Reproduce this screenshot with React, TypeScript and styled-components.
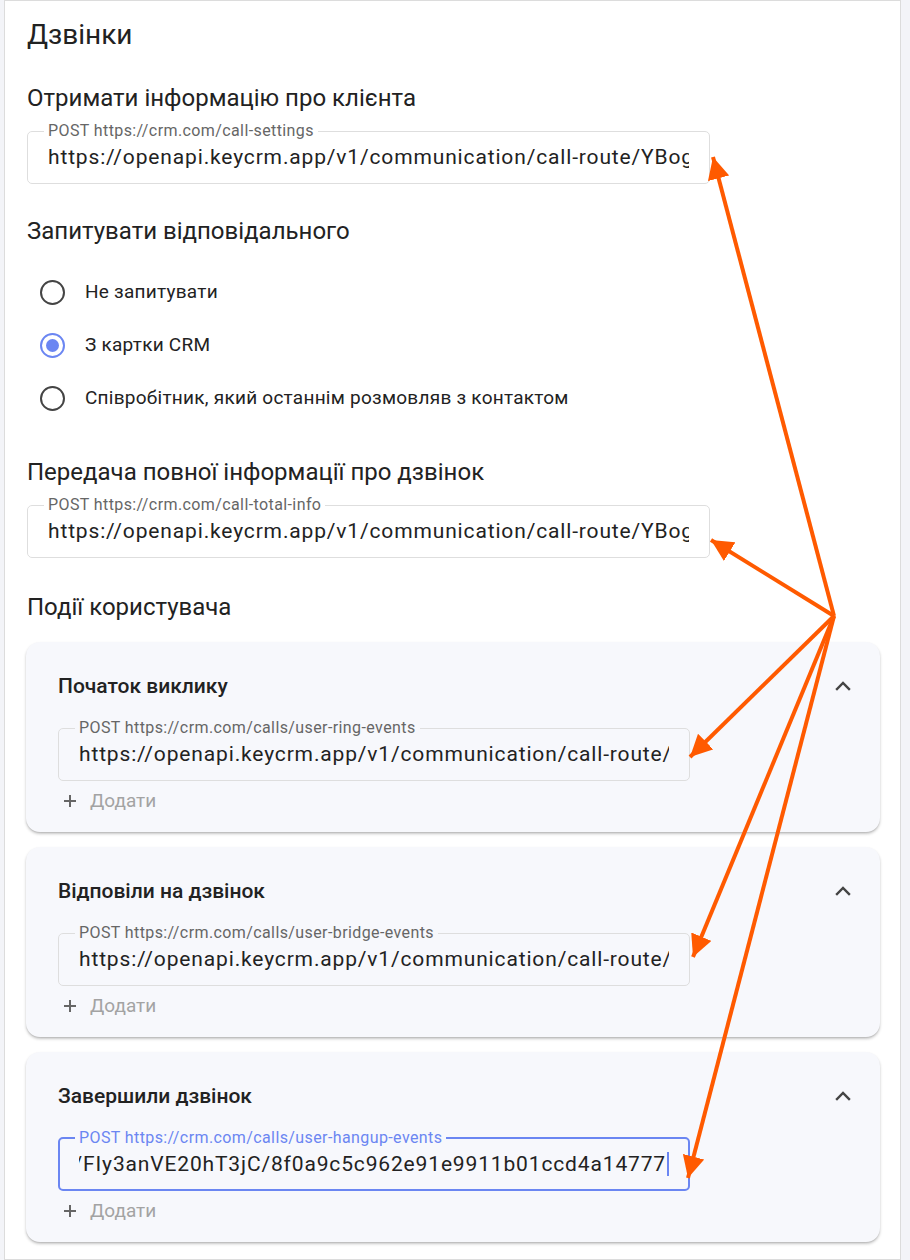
import React from "react";
import styled, { createGlobalStyle } from "styled-components";

const GlobalStyle = createGlobalStyle`
  body {
    margin: 0;
    background: #f3f4f8;
    font-family: Roboto, "Noto Sans", sans-serif;
    color: #222;
  }
`;

const Page = styled.div`
  position: relative;
  padding-left: 4px;
`;

const Panel = styled.div`
  box-sizing: border-box;
  width: 897px;
  background: #fff;
  border: 1px solid #dcdcdc;
  padding: 16px 20px 17px 22px;
`;

const PageTitle = styled.h1`
  margin: 0 0 30px;
  font-size: 28px;
  font-weight: 400;
  line-height: 36px;
  color: #222;
`;

const SectionTitle = styled.h2`
  margin: 0 0 10px;
  font-size: 24px;
  font-weight: 400;
  line-height: 30px;
  color: #222;
`;

const Section = styled.section<{ $gap?: number }>`
  margin-bottom: ${(p) => p.$gap ?? 32}px;
`;

const Field = styled.fieldset<{ $focused?: boolean; $width: number; $bg?: string }>`
  margin: 0;
  width: ${(p) => p.$width}px;
  box-sizing: border-box;
  border: ${(p) => (p.$focused ? "2px solid #6b86f2" : "1px solid #dedede")};
  border-radius: 5px;
  padding: 0 ${(p) => (p.$focused ? 19 : 20)}px ${(p) => (p.$focused ? 13 : 14)}px;
  background: ${(p) => p.$bg || "#fff"};
  min-width: 0;
`;

const Legend = styled.legend<{ $focused?: boolean }>`
  padding: 0 4px;
  margin-left: -4px;
  font-size: 16px;
  line-height: 16px;
  letter-spacing: 0.4px;
  color: ${(p) => (p.$focused ? "#6b86f2" : "#666")};
`;

const Value = styled.div<{ $end?: boolean }>`
  display: flex;
  justify-content: ${(p) => (p.$end ? "flex-end" : "flex-start")};
  align-items: center;
  overflow: hidden;
  white-space: nowrap;
  padding-top: 6px;
  font-size: 21px;
  line-height: 24px;
  letter-spacing: 0.85px;
  color: #222;
`;

const Caret = styled.span`
  flex: none;
  display: inline-block;
  width: 2px;
  height: 24px;
  margin-left: 1px;
  background: #6b86f2;
`;

const RadioList = styled.div`
  display: flex;
  flex-direction: column;
  gap: 21px;
  padding: 20px 0 0 13px;
`;

const RadioRow = styled.label`
  display: flex;
  align-items: center;
  gap: 20px;
  font-size: 19px;
  line-height: 32px;
  letter-spacing: 0.25px;
  color: #222;
`;

const RadioCircle = styled.span<{ $checked?: boolean }>`
  box-sizing: border-box;
  width: 25px;
  height: 25px;
  border-radius: 50%;
  border: 2px solid ${(p) => (p.$checked ? "#6b86f2" : "#444")};
  display: flex;
  align-items: center;
  justify-content: center;
  &::after {
    content: "";
    width: 13px;
    height: 13px;
    border-radius: 50%;
    background: ${(p) => (p.$checked ? "#6b86f2" : "transparent")};
  }
`;

const Cards = styled.div`
  display: flex;
  flex-direction: column;
  gap: 15px;
  margin-top: 20px;
`;

const Card = styled.div`
  margin-left: -1px;
  background: #f7f8fc;
  border-radius: 14px;
  box-shadow: 0 1px 1px rgba(0, 0, 0, 0.08), 0 2px 3px rgba(0, 0, 0, 0.22);
  padding: 31px 25px 18px 32px;
`;

const CardHead = styled.div`
  display: flex;
  align-items: center;
  justify-content: space-between;
  margin-bottom: 21px;
`;

const CardTitle = styled.h3`
  margin: 0;
  font-size: 21px;
  font-weight: 500;
  line-height: 26px;
  color: #222;
`;

const AddButton = styled.button`
  display: flex;
  align-items: center;
  gap: 14px;
  margin: 7px 0 0;
  padding: 0 0 0 6px;
  border: none;
  background: none;
  font-family: inherit;
  font-size: 19px;
  line-height: 26px;
  color: #a3a3a3;
`;

const Overlay = styled.svg`
  position: absolute;
  left: 0;
  top: 0;
  pointer-events: none;
`;

const LONG_URL = "https://openapi.keycrm.app/v1/communication/call-route/YBogKz1Lq/FIy3anVE20hT3jC/8f0a9c5c962e91e9911b01ccd4a14777";

function UrlField(props: { label: string; width: number; bg?: string; focused?: boolean }) {
  return (
    <Field $width={props.width} $bg={props.bg} $focused={props.focused}>
      <Legend $focused={props.focused}>{props.label}</Legend>
      <Value $end={props.focused}>
        <span>{LONG_URL}</span>
        {props.focused && <Caret />}
      </Value>
    </Field>
  );
}

function Chevron() {
  return (
    <svg width="24" height="24" viewBox="0 0 24 24" fill="none">
      <path d="M6 15l6-6 6 6" stroke="#444" strokeWidth="2.4" strokeLinecap="square" />
    </svg>
  );
}

function Plus() {
  return (
    <svg width="12" height="12" viewBox="0 0 12 12">
      <path d="M6 0v12M0 6h12" stroke="#666" strokeWidth="2" />
    </svg>
  );
}

const events = [
  { title: "Початок виклику", label: "POST https://crm.com/calls/user-ring-events" },
  { title: "Відповіли на дзвінок", label: "POST https://crm.com/calls/user-bridge-events" },
  { title: "Завершили дзвінок", label: "POST https://crm.com/calls/user-hangup-events", focused: true },
];

const radios = [
  { text: "Не запитувати" },
  { text: "З картки CRM", checked: true },
  { text: "Співробітник, який останнім розмовляв з контактом" },
];

const origin = { x: 834, y: 616 };
const tips = [
  { x: 713, y: 157 },
  { x: 711, y: 540 },
  { x: 690, y: 757 },
  { x: 693, y: 957 },
  { x: 688, y: 1178 },
];

export default function App() {
  return (
    <Page>
      <GlobalStyle />
      <Panel>
        <PageTitle>Дзвінки</PageTitle>

        <Section>
          <SectionTitle>Отримати інформацію про клієнта</SectionTitle>
          <UrlField label="POST https://crm.com/call-settings" width={683} />
        </Section>

        <Section $gap={43}>
          <SectionTitle>Запитувати відповідального</SectionTitle>
          <RadioList>
            {radios.map((r) => (
              <RadioRow key={r.text}>
                <RadioCircle $checked={r.checked} />
                {r.text}
              </RadioRow>
            ))}
          </RadioList>
        </Section>

        <Section $gap={34}>
          <SectionTitle>Передача повної інформації про дзвінок</SectionTitle>
          <UrlField label="POST https://crm.com/call-total-info" width={683} />
        </Section>

        <SectionTitle>Події користувача</SectionTitle>
        <Cards>
          {events.map((e) => (
            <Card key={e.title}>
              <CardHead>
                <CardTitle>{e.title}</CardTitle>
                <Chevron />
              </CardHead>
              <UrlField label={e.label} width={632} bg="#f7f8fc" focused={e.focused} />
              <AddButton>
                <Plus />
                Додати
              </AddButton>
            </Card>
          ))}
        </Cards>
      </Panel>

      <Overlay width="910" height="1260">
        <defs>
          <marker id="head" markerUnits="userSpaceOnUse" markerWidth="24" markerHeight="22" refX="22" refY="11" orient="auto">
            <path d="M0 0L22 11L0 22z" fill="#ff5a00" />
          </marker>
        </defs>
        {tips.map((t, i) => (
          <line key={i} x1={origin.x} y1={origin.y} x2={t.x} y2={t.y} stroke="#ff5a00" strokeWidth="4" markerEnd="url(#head)" />
        ))}
      </Overlay>
    </Page>
  );
}
